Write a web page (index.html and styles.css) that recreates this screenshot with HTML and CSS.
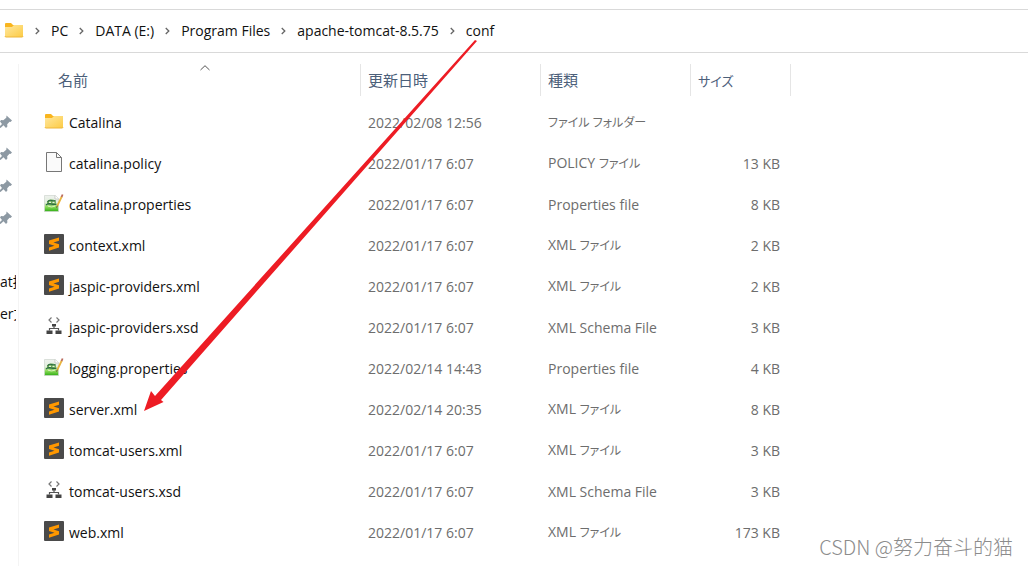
FILE: index.html
```html
<!DOCTYPE html>
<html lang="ja">
<head>
    <meta charset="UTF-8">
    <meta name="viewport" content="width=device-width, initial-scale=1.0">
    <title>conf</title>
    <link rel="stylesheet" href="styles.css">
</head>
<body>
    <!-- Icons shared by the rows -->
    <svg class="sprite" width="0" height="0" aria-hidden="true">
        <defs>
            <linearGradient id="folderFill" x1="0" y1="0" x2="1" y2="1">
                <stop offset="0" stop-color="#ffe8a0"/>
                <stop offset="1" stop-color="#fccb45"/>
            </linearGradient>
            <linearGradient id="sheetFill" x1="0" y1="0" x2="0" y2="1">
                <stop offset="0" stop-color="#eef1ee"/>
                <stop offset="0.45" stop-color="#e2efdc"/>
                <stop offset="0.7" stop-color="#8fdc5c"/>
                <stop offset="1" stop-color="#2fae14"/>
            </linearGradient>
        </defs>
        <symbol id="folder" viewBox="0 0 20 20">
            <path d="M1 4q0-1 1-1h5l2 2h9q1 0 1 1v4H1z" fill="#f9b51e"/>
            <path d="M1 7h7l2-2h9v11q0 1-1 1H2q-1 0-1-1z" fill="url(#folderFill)"/>
            <path d="M1 16q0 1 1 1h16q1 0 1-1" fill="none" stroke="#eeb63b"/>
        </symbol>
        <symbol id="file" viewBox="0 0 20 20">
            <path d="M2.500 .5h10l5 5v14h-15z" fill="#fafafa" stroke="#777"/>
            <path d="M12.500 .5v5h5" fill="none" stroke="#777"/>
        </symbol>
        <symbol id="props" viewBox="0 0 20 20">
            <path d="M.5 2.500h11l3 3v13H.5z" fill="url(#sheetFill)" stroke="#cfd6cf" stroke-width=".7"/>
            <path d="M11 2.500v3.500h3.500" fill="#fff" stroke="#bbb" stroke-width=".7"/>
            <ellipse cx="7.500" cy="9.500" rx="4.500" ry="3" fill="#6cab52"/>
            <path d="M3.500 9q1.500-2.500 4-1.500t4 0M2 12q2.500-2 5.500-1t5 0" fill="none" stroke="#2c6a45" stroke-width="1.100"/>
            <path d="M5 9.300h2M8.500 9.300h2" stroke="#e4f3dc" stroke-width="1.200"/>
            <path d="M4 13.200q3.500 1.500 7 0" fill="none" stroke="#d6f2b8"/>
            <path d="M13.200 13L17.800 3.500" stroke="#e9b440" stroke-width="1.800"/>
            <path d="M17.600 4l1-2.500" stroke="#b96a5c" stroke-width="1.800"/>
            <path d="M13.300 12.700l-.7 2" stroke="#6b5136"/>
        </symbol>
        <symbol id="sublime" viewBox="0 0 20 20">
            <rect width="20" height="20" rx="1" fill="#4a4a4a"/>
            <path d="M5 6.500L15 3.500v3.200L9.500 8.500l5.500 1.700v3.300L5 16.700v-3.200l5.500-1.800L5 10z" fill="#ff9800"/>
        </symbol>
        <symbol id="schema" viewBox="0 0 20 20">
            <path d="M7.500 1.500L5 4l2.500 2.500M12.500 1.500L15 4l-2.500 2.500" fill="none" stroke="#777" stroke-width="1.200"/>
            <path d="M8 8h4v2.500H8zM2.500 14.500h6v3.500h-6zM11.500 14.500h6v3.500h-6z" fill="#444"/>
            <path d="M10 10v2.500M5.500 14.500v-2h9v2" fill="none" stroke="#555" stroke-width="1.200"/>
        </symbol>
        <symbol id="chevron" viewBox="0 0 8 10">
            <path d="M2 1.500L5.500 5 2 8.500" fill="none" stroke="#666" stroke-width="1.500"/>
        </symbol>
        <symbol id="pin" viewBox="0 0 14 14">
            <path d="M6.500 .5L12 5.500l-1.500 1.500-1-.2-2.300 2.500.2 2.200L6 13 3.500 10.300 .5 13 0 12.800V11L2 9 0 6.500 1 5l2.300.2L6.300 2.800z" fill="#8d99a3"/>
        </symbol>
    </svg>

    <nav class="address" aria-label="アドレス">
        <svg class="icon"><use href="#folder"/></svg>
        <svg class="chevron"><use href="#chevron"/></svg>
        <a href="#">PC</a>
        <svg class="chevron"><use href="#chevron"/></svg>
        <a href="#">DATA (E:)</a>
        <svg class="chevron"><use href="#chevron"/></svg>
        <a href="#">Program Files</a>
        <svg class="chevron"><use href="#chevron"/></svg>
        <a href="#">apache-tomcat-8.5.75</a>
        <svg class="chevron"><use href="#chevron"/></svg>
        <a href="#">conf</a>
    </nav>

    <div class="explorer">
        <ul class="sidebar">
            <li><svg class="pin"><use href="#pin"/></svg></li>
            <li><svg class="pin"><use href="#pin"/></svg></li>
            <li><svg class="pin"><use href="#pin"/></svg></li>
            <li><svg class="pin"><use href="#pin"/></svg></li>
            <li></li>
            <li>at描</li>
            <li>er文</li>
        </ul>

        <main class="content">
            <table class="files">
                <colgroup>
                    <col class="col-name">
                    <col class="col-date">
                    <col class="col-type">
                    <col class="col-size">
                </colgroup>
                <thead>
                    <tr>
                        <th class="name" aria-sort="ascending">
                            <div class="head">名前
                                <svg class="sort" viewBox="0 0 10 6"><path d="M.5 5L5 .7 9.500 5" fill="none" stroke="#555"/></svg>
                            </div>
                        </th>
                        <th><div class="head">更新日時</div></th>
                        <th><div class="head">種類</div></th>
                        <th><div class="head"><span class="kana">サイズ</span></div></th>
                    </tr>
                </thead>
                <tbody>
                    <tr>
                        <td class="name"><div class="entry"><svg class="icon"><use href="#folder"/></svg>Catalina</div></td>
                        <td>2022/02/08 12:56</td>
                        <td><span class="kana">ファイル フォルダー</span></td>
                        <td class="size"></td>
                    </tr>
                    <tr>
                        <td class="name"><div class="entry"><svg class="icon"><use href="#file"/></svg>catalina.policy</div></td>
                        <td>2022/01/17 6:07</td>
                        <td>POLICY <span class="kana">ファイル</span></td>
                        <td class="size">13 KB</td>
                    </tr>
                    <tr>
                        <td class="name"><div class="entry"><svg class="icon"><use href="#props"/></svg>catalina.properties</div></td>
                        <td>2022/01/17 6:07</td>
                        <td>Properties file</td>
                        <td class="size">8 KB</td>
                    </tr>
                    <tr>
                        <td class="name"><div class="entry"><svg class="icon"><use href="#sublime"/></svg>context.xml</div></td>
                        <td>2022/01/17 6:07</td>
                        <td>XML <span class="kana">ファイル</span></td>
                        <td class="size">2 KB</td>
                    </tr>
                    <tr>
                        <td class="name"><div class="entry"><svg class="icon"><use href="#sublime"/></svg>jaspic-providers.xml</div></td>
                        <td>2022/01/17 6:07</td>
                        <td>XML <span class="kana">ファイル</span></td>
                        <td class="size">2 KB</td>
                    </tr>
                    <tr>
                        <td class="name"><div class="entry"><svg class="icon"><use href="#schema"/></svg>jaspic-providers.xsd</div></td>
                        <td>2022/01/17 6:07</td>
                        <td>XML Schema File</td>
                        <td class="size">3 KB</td>
                    </tr>
                    <tr>
                        <td class="name"><div class="entry"><svg class="icon"><use href="#props"/></svg>logging.properties</div></td>
                        <td>2022/02/14 14:43</td>
                        <td>Properties file</td>
                        <td class="size">4 KB</td>
                    </tr>
                    <tr>
                        <td class="name"><div class="entry"><svg class="icon"><use href="#sublime"/></svg>server.xml</div></td>
                        <td>2022/02/14 20:35</td>
                        <td>XML <span class="kana">ファイル</span></td>
                        <td class="size">8 KB</td>
                    </tr>
                    <tr>
                        <td class="name"><div class="entry"><svg class="icon"><use href="#sublime"/></svg>tomcat-users.xml</div></td>
                        <td>2022/01/17 6:07</td>
                        <td>XML <span class="kana">ファイル</span></td>
                        <td class="size">3 KB</td>
                    </tr>
                    <tr>
                        <td class="name"><div class="entry"><svg class="icon"><use href="#schema"/></svg>tomcat-users.xsd</div></td>
                        <td>2022/01/17 6:07</td>
                        <td>XML Schema File</td>
                        <td class="size">3 KB</td>
                    </tr>
                    <tr>
                        <td class="name"><div class="entry"><svg class="icon"><use href="#sublime"/></svg>web.xml</div></td>
                        <td>2022/01/17 6:07</td>
                        <td>XML <span class="kana">ファイル</span></td>
                        <td class="size">173 KB</td>
                    </tr>
                </tbody>
            </table>
        </main>
    </div>

    <!-- Arrow from conf to server.xml -->
    <svg class="arrow" width="340" height="380" viewBox="140 35 340 380" aria-hidden="true">
        <path d="M475 40l2 1L161 400l2.500 2L144 411l7-20 4 5z" fill="#ed1c24"/>
    </svg>

    <div class="watermark" lang="zh-CN">CSDN @努力奋斗的猫</div>
</body>
</html>
```
FILE: styles.css
```css
* {
    box-sizing: border-box;
}

body {
    margin: 0;
    padding-top: 9px;
    min-height: 100vh;
    display: flex;
    flex-direction: column;
    position: relative;
    overflow: hidden;
    font-family: "Open Sans", "Noto Sans CJK JP", sans-serif;
    font-size: 14px;
    line-height: 20px;
    color: #111;
    background-color: #fff;
}

.sprite {
    position: absolute;
}

.icon {
    width: 20px;
    height: 20px;
    flex: none;
    margin-bottom: 3px;
}

/* Address bar */
.address {
    display: flex;
    align-items: center;
    gap: 10px;
    height: 44px;
    padding-left: 4px;
    border-top: 1px solid #d9d9d9;
    border-bottom: 1px solid #d9d9d9;
    white-space: nowrap;
}

.address a {
    color: #111;
    text-decoration: none;
}

.chevron {
    width: 7px;
    height: 10px;
    flex: none;
}

.explorer {
    display: flex;
    flex: 1;
    padding-top: 11px;
}

/* Left pane, only its right edge is visible */
.sidebar {
    width: 19px;
    flex: none;
    margin: 0;
    padding: 42px 2px 0 0;
    border-right: 1px solid #f4f4f4;
    list-style: none;
}

.sidebar li {
    display: flex;
    align-items: center;
    height: 32px;
    overflow: hidden;
    white-space: nowrap;
}

.pin {
    width: 14px;
    height: 14px;
    flex: none;
}

.content {
    flex: 1;
}

/* File list */
.files {
    table-layout: fixed;
    width: 772px;
    border-collapse: collapse;
}

.col-date {
    width: 180px;
}

.col-type {
    width: 150px;
}

.col-size {
    width: 100px;
}

.files th {
    padding: 0 0 6px;
    font-size: 15px;
    font-weight: normal;
    text-align: left;
    color: #4c607a;
}

.head {
    position: relative;
    height: 32px;
    padding-left: 7px;
    line-height: 32px;
    border-right: 1px solid #e5e5e5;
}

.name .head {
    padding-left: 39px;
}

.sort {
    position: absolute;
    top: 1px;
    left: 181px;
    width: 10px;
    height: 6px;
}

.files td {
    height: 41px;
    padding: 0 7px;
    color: #6d6d6d;
    white-space: nowrap;
}

.files td.name {
    padding-left: 25px;
    color: #111;
}

.entry {
    display: flex;
    align-items: center;
    gap: 5px;
}

.files td.size {
    padding-right: 11px;
    text-align: right;
}

/* Proportional, narrower katakana */
.kana {
    font-size: 12px;
    font-feature-settings: "palt";
}

.files th .kana {
    font-size: 13px;
}

.arrow {
    position: absolute;
    top: 35px;
    left: 140px;
    pointer-events: none;
}

.watermark {
    position: absolute;
    right: 15px;
    bottom: 5px;
    font-family: "Noto Sans CJK SC", sans-serif;
    font-size: 20px;
    font-weight: 300;
    line-height: 28px;
    color: #8c8c8c;
}
```
